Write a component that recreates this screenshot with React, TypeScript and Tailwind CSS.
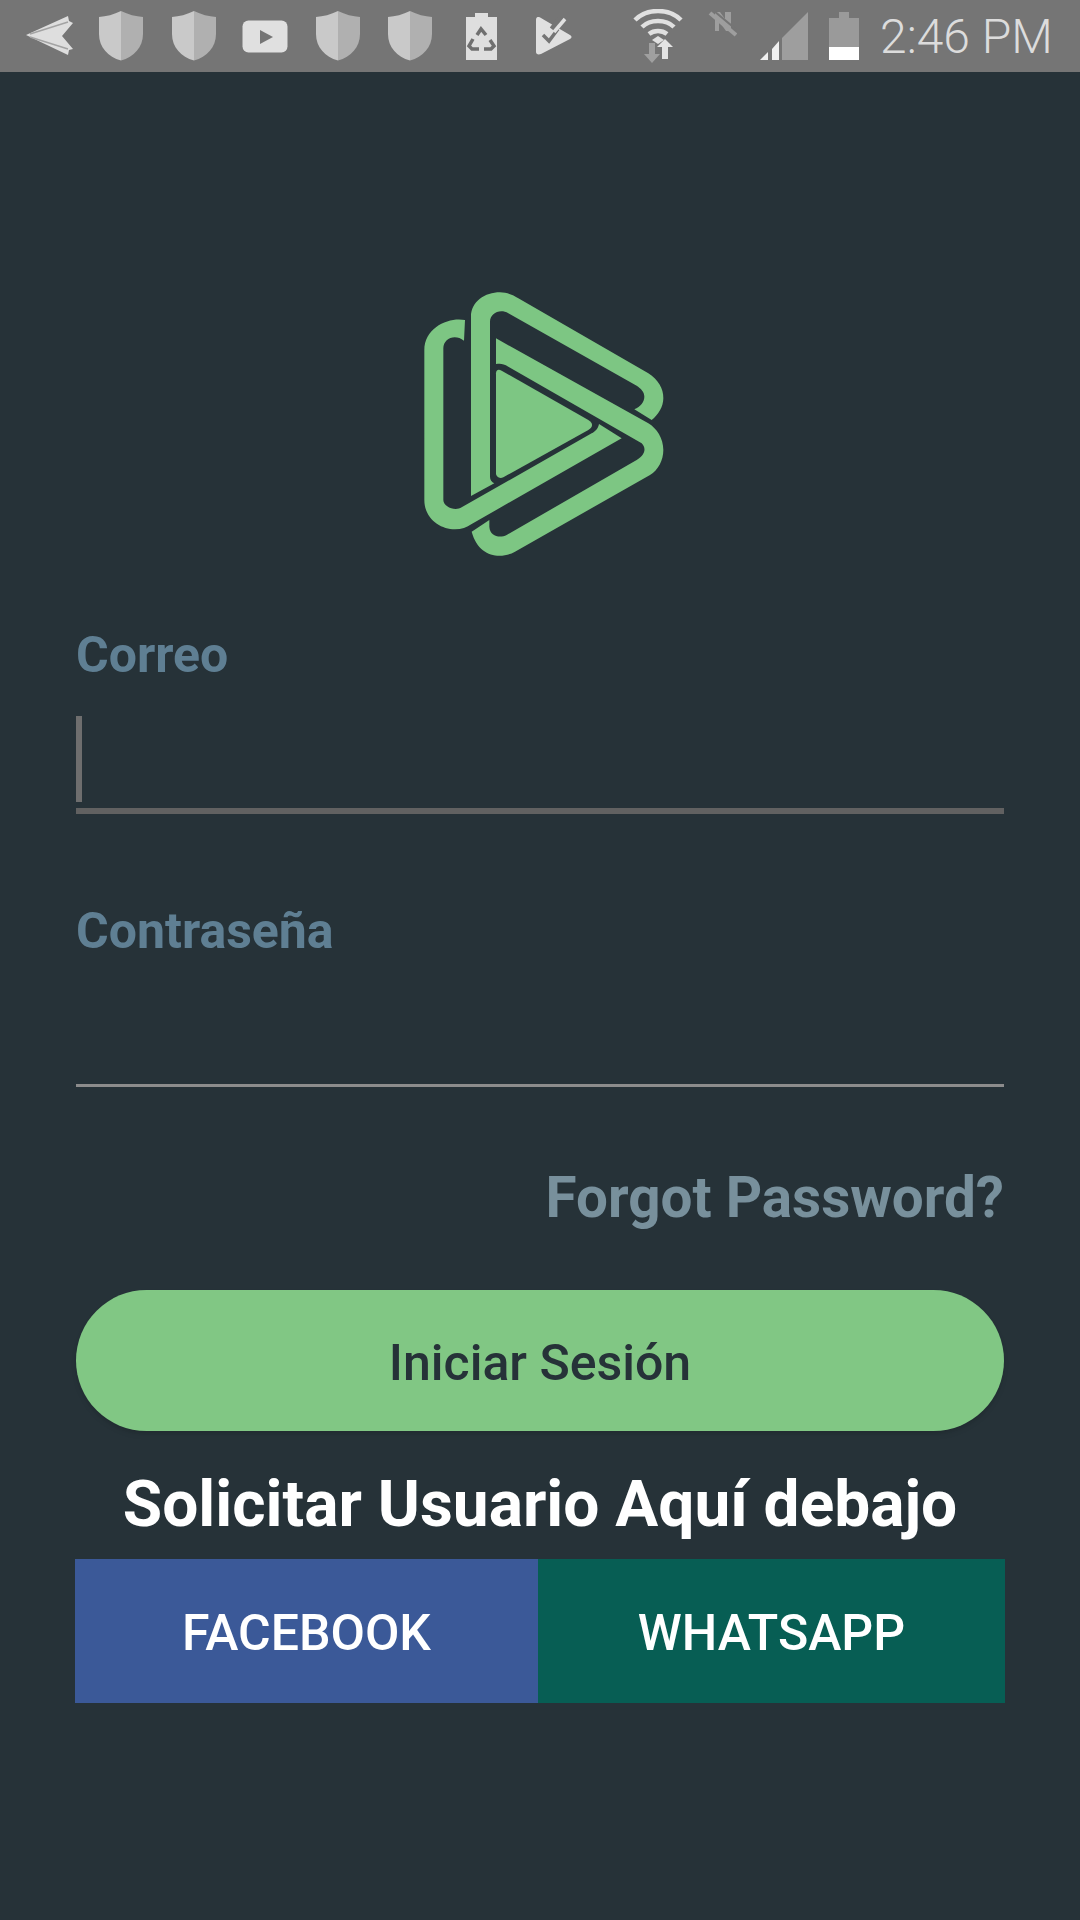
function Shield({ className }: { className: string }) {
  return (
    <svg width="46" height="50" viewBox="0 0 46 50" className={className}>
      <path d="M23 0C16 3.500 8 5.500 1 6V23C1 36 10 46 23 49.500Z" fill="#c9c9c9" />
      <path d="M23 0C30 3.500 38 5.500 45 6V23C45 36 36 46 23 49.500Z" fill="#b0b0b0" />
    </svg>
  )
}

function StatusBar() {
  return (
    <div className="flex h-[72px] items-center bg-[#757575] pl-[26px]">
      <svg width="47" height="40" viewBox="0 0 47 40" className="shrink-0">
        <path d="M0 19L42 0L43 5L47 7L36 20L47 33L43 34L42 39Z" fill="#dedede" />
        <path d="M4 18L42 6M4 21L42 33" stroke="#a3a3a3" strokeWidth="1.500" fill="none" />
      </svg>
      <Shield className="ml-[25px] shrink-0" />
      <Shield className="ml-[27px] shrink-0" />
      <svg width="46" height="33" viewBox="0 0 46 33" className="ml-[25px] shrink-0">
        <rect x="0.500" y="0.500" width="45" height="32" rx="6" fill="#e0e0e0" />
        <path d="M18 10L31 17L18 24Z" fill="#757575" />
      </svg>
      <Shield className="ml-[27px] shrink-0" />
      <Shield className="ml-[26px] shrink-0" />
      <svg width="31" height="47" viewBox="0 0 31 47" className="ml-[33px] shrink-0">
        <path d="M9 0H22V4H31V47H0V4H9Z" fill="#dedede" />
        <g fill="none" stroke="#6f6f6f" strokeWidth="3.500">
          <path d="M11 22L15 16L20 22" />
          <path d="M7 26L3 33L6 36H13" />
          <path d="M24 27L28 33L25 36H18" />
        </g>
      </svg>
      <svg width="36" height="38" viewBox="0 0 36 38" className="ml-[39px] shrink-0">
        <path d="M0 3C0 0 2 -1 5 1L34 18C36 19 36 21 34 22L5 37C2 38 0 37 0 35Z" fill="#e0e0e0" />
        <path d="M7 18L13 24L22 12" fill="none" stroke="#757575" strokeWidth="3.500" />
        <path d="M17 13L26 1" fill="none" stroke="#757575" strokeWidth="8" />
        <path d="M18 15L29 2" fill="none" stroke="#e0e0e0" strokeWidth="3.500" />
      </svg>
      <svg width="50" height="54" viewBox="0 0 50 54" className="ml-[61px] shrink-0">
        <g fill="none" stroke="#e0e0e0" strokeWidth="4.500">
          <path d="M2 11C14 -1 36 -1 48 11" />
          <path d="M9 18C17 10 33 10 41 18" />
          <path d="M16 25C21 21 29 21 34 25" />
        </g>
        <path d="M19 31L25 27L31 31L25 35Z" fill="#e0e0e0" />
        <path d="M16 34H22V45H27L19 54L11 45H16Z" fill="#a0a0a0" />
        <path d="M29 50V38H24L32 30L40 38H35V50Z" fill="#e4e4e4" />
      </svg>
      <svg width="29" height="26" viewBox="0 0 29 26" className="mb-[24px] ml-[25px] shrink-0">
        <path d="M7 1H12L17 8V1H23V20H18L11 10V20H7Z" fill="#9e9e9e" />
        <path d="M2 2L28 24" stroke="#9e9e9e" strokeWidth="4" />
        <path d="M6 0L30 20" stroke="#757575" strokeWidth="2" />
      </svg>
      <svg width="48" height="49" viewBox="0 0 48 49" className="ml-[23px] shrink-0">
        <path d="M0 48L8 40V48Z" fill="#f0f0f0" />
        <path d="M12 37L19 29V48H12Z" fill="#f0f0f0" />
        <path d="M22 26L48 0V48H22Z" fill="#9e9e9e" />
      </svg>
      <div className="ml-[21px] flex w-[30px] shrink-0 flex-col items-center">
        <div className="h-[6px] w-[10px] bg-[#9a9a9a]" />
        <div className="h-[29px] w-full bg-[#9a9a9a]" />
        <div className="h-[13px] w-full bg-white" />
      </div>
      <span className="mt-[2px] ml-[21px] font-['Roboto',sans-serif] text-[48px] leading-none font-light whitespace-nowrap text-[#dcdcdc]">
        2:46 PM
      </span>
    </div>
  )
}

function Logo() {
  return (
    <svg width="290" height="300" viewBox="0 0 870 900" fill="#7dc683">
      <path d="M213 678V140C213 95 255 67 300 67C320 67 340 75 355 85L745 310C775 330 790 355 790 385C790 410 775 435 755 450L703 418C722 410 733 395 733 380C733 365 722 355 710 347L325 130C300 115 270 130 270 155V620C270 630 275 635 283 640Z" />
      <path d="M288 310C288 300 295 297 305 302L565 450C580 460 580 470 565 480L310 622C298 628 288 620 288 610Z" />
      <path d="M288 205L745 460C770 475 790 505 790 540C790 570 775 600 750 615L345 845C300 870 235 860 215 785L268 750V770C270 800 300 805 320 795L710 570C735 555 740 535 725 520L325 290C310 280 300 280 288 282Z" />
      <path d="M195 150C150 140 73 170 73 240V690C73 745 120 778 165 778C185 778 200 772 215 762L665 505L597 462C595 475 585 485 575 490L185 712C165 725 130 710 130 690V235C130 205 165 190 192 212Z" />
    </svg>
  )
}

export default function App() {
  return (
    <div className="flex min-h-[1920px] flex-col bg-[#263238] font-['Roboto',sans-serif]">
      <StatusBar />
      <div className="flex flex-col px-[76px]">
        <div className="mt-[198px] flex justify-center pl-[10px]">
          <Logo />
        </div>

        <label className="mt-[57px] text-[50px] leading-[56px] font-bold text-[#5f7f93]">Correo</label>
        <div className="mt-[33px] h-[86px] w-[6px] bg-[#6e6e6e]" />
        <div className="mt-[6px] h-[6px] bg-[#616161]" />

        <label className="mt-[89px] text-[50px] leading-[56px] font-bold text-[#5f7f93]">Contraseña</label>
        <div className="mt-[125px] h-[3px] bg-[#8c8c8c]" />

        <button className="mt-[78px] self-end text-[56.6px] leading-[66px] font-bold text-[#78909c]">
          Forgot Password?
        </button>

        <button className="mt-[59px] h-[141px] rounded-full bg-[#81c784] pt-[6px] text-[50px] font-medium text-[#263238] shadow-md">
          Iniciar Sesión
        </button>

        <h2 className="mt-[39px] text-center text-[64px] leading-[70px] font-bold text-white">
          Solicitar Usuario Aquí debajo
        </h2>

        <div className="-mx-px mt-[19px] flex h-[144px]">
          <button className="w-[463px] bg-[#3b5998] pt-[4px] text-[50px] font-medium text-white">FACEBOOK</button>
          <button className="flex-1 bg-[#075e54] pt-[4px] text-[50px] font-medium text-white">WHATSAPP</button>
        </div>
      </div>
    </div>
  )
}
